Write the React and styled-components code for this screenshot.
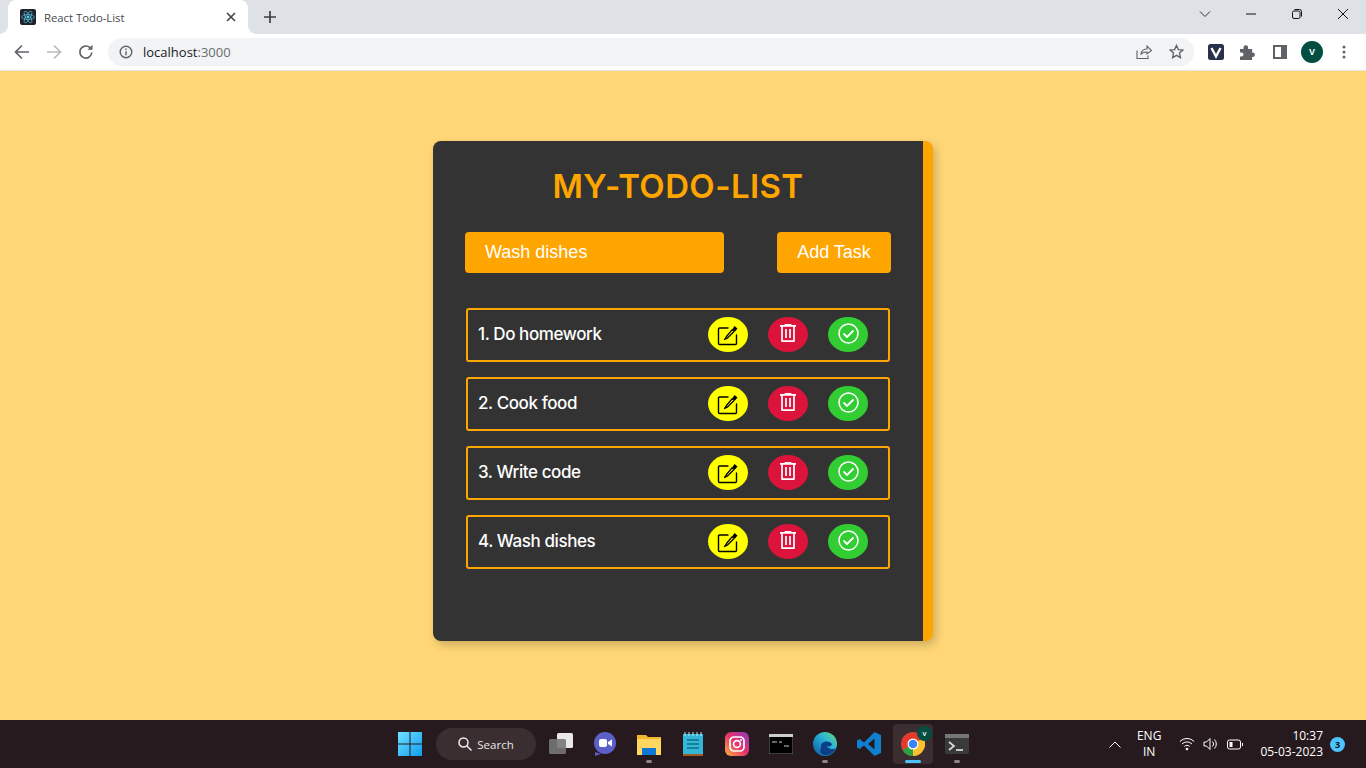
import React from 'react';
import styled, { createGlobalStyle } from 'styled-components';

const Global = createGlobalStyle`
  html, body { margin: 0; padding: 0; height: 100%; overflow: hidden; }
  body { font-family: "Liberation Sans", Arial, sans-serif; background: #ffd777; }
  #root { height: 100vh; }
`;
const Screen = styled.div`display:flex;flex-direction:column;width:1366px;height:768px;overflow:hidden;`;
const Browser = styled.header`flex:none;height:71px;display:flex;flex-direction:column;background:#fff;`;
const TabStrip = styled.div`height:34px;flex:none;background:#dee1e6;display:flex;align-items:stretch;padding-left:8px;`;
const Tab = styled.div`
  width:240px;height:34px;background:#fff;border-radius:8px 8px 0 0;display:flex;align-items:center;padding:0 12px;box-sizing:border-box;font-size:11.300px;color:#45494e;font-family:"Open Sans","Liberation Sans",sans-serif;position:relative;
  &::before,&::after{content:"";position:absolute;bottom:0;width:8px;height:8px;}
  &::before{left:-8px;background:radial-gradient(circle at 0 0,#dee1e6 7.500px,#fff 8px);}
  &::after{right:-8px;background:radial-gradient(circle at 100% 0,#dee1e6 7.500px,#fff 8px);}
`;
const Favicon = styled.span`width:16px;height:16px;background:#20232a;border-radius:2px;display:flex;align-items:center;justify-content:center;margin-right:8px;`;
const TabTitle = styled.span`flex:1;`;
const NewTab = styled.span`margin-left:6px;width:32px;display:flex;align-items:center;justify-content:center;`;
const WindowControls = styled.div`margin-left:auto;display:flex;align-self:flex-start;`;
const WinBtn = styled.span`width:46px;height:28px;display:flex;align-items:center;justify-content:center;`;
const Toolbar = styled.div`height:37px;flex:none;display:flex;align-items:center;padding:0 0 1px 6px;box-sizing:border-box;border-bottom:1px solid #e3e3e3;`;
const NavBtn = styled.span`width:32px;height:32px;display:flex;align-items:center;justify-content:center;`;
const Omnibox = styled.div`flex:none;width:1086px;height:28px;margin-left:6px;background:#f1f3f4;border-radius:14px;display:flex;align-items:center;box-sizing:border-box;padding:0 2px 0 11px;font-family:"Open Sans","Liberation Sans",sans-serif;font-size:13px;color:#202124;`;
const Host = styled.span`margin-left:10px;`;
const Port = styled.span`color:#6a6e72;flex:1;`;
const OmniIcon = styled.span`width:32px;display:flex;justify-content:center;`;
const Avatar = styled.span`width:22px;height:22px;border-radius:50%;background:#024f41;color:#fff;font-size:9px;font-weight:700;display:flex;align-items:center;justify-content:center;`;
const ChromeBadge = styled(Avatar)`position:absolute;right:1px;top:2px;width:15px;height:15px;font-size:6px;`;
const ExtIcon = styled.span`width:32px;height:32px;display:flex;align-items:center;justify-content:center;`;
const ExtStart = styled(ExtIcon)`margin-left:6px;`;
const Main = styled.main`flex:1;background:#ffd777;display:flex;justify-content:center;align-items:flex-start;padding-top:70px;box-sizing:border-box;`;
const Card = styled.section`width:500px;height:500px;box-sizing:border-box;background:#333;border-right:10px solid orange;border-radius:8px;box-shadow:3px 4px 10px rgba(0,0,0,.2);padding:24px 32px 0;display:flex;flex-direction:column;`;
const Title = styled.h1`margin:0;height:42px;line-height:42px;text-align:center;color:orange;font-family:Inter,"Noto Sans",sans-serif;font-size:33px;font-weight:600;letter-spacing:.4px;`;
const Form = styled.div`display:flex;justify-content:space-between;margin:25px 0 35px;width:426px;`;
const Input = styled.div`width:259px;height:41px;box-sizing:border-box;padding-left:20px;line-height:40px;background:orange;border-radius:4px;color:#fff;font-size:18px;`;
const AddBtn = styled.div`width:114px;height:41px;line-height:40px;text-align:center;background:orange;border-radius:4px;color:#fff;font-size:18px;`;
const List = styled.ul`list-style:none;margin:0;padding:0 0 0 1px;display:flex;flex-direction:column;gap:15px;width:424px;`;
const Row = styled.li`height:54px;box-sizing:border-box;border:2px solid orange;border-radius:3px;display:flex;align-items:center;padding:0 20px 1px 10px;`;
const Label = styled.span`flex:1;color:#fff;font-family:Inter,"Noto Sans",sans-serif;font-weight:500;font-size:17px;letter-spacing:-.42px;padding-bottom:1px;`;
const Actions = styled.div`display:flex;gap:20px;`;
const RoundBtn = styled.span`width:40px;height:35px;border-radius:50%;background:${p => p.$bg};display:flex;align-items:center;justify-content:center;`;
const Taskbar = styled.footer`flex:none;height:48px;background:#271a1e;display:flex;align-items:center;position:relative;font-family:"Open Sans","Liberation Sans",sans-serif;color:#fff;`;
const Center = styled.div`position:absolute;left:388px;top:0;height:48px;display:flex;align-items:center;`;
const Search = styled.div`width:100px;height:32px;margin:0 3px 0 4px;border-radius:16px;background:#3a2e31;display:flex;align-items:center;justify-content:center;gap:5px;font-size:11.500px;font-weight:500;color:#e9e6e6;`;
const AppIcon = styled.span`width:40px;height:40px;margin:0 2px;display:flex;align-items:center;justify-content:center;position:relative;border-radius:4px;background:${p => p.$active ? '#3a2e31' : 'transparent'};`;
const Dot = styled.i`position:absolute;left:50%;bottom:1px;transform:translateX(-50%);height:3px;width:${p => p.$active ? 16 : 6}px;border-radius:2px;background:${p => p.$active ? '#4cc2ff' : '#8d8588'};`;
const Tray = styled.div`margin-left:auto;display:flex;align-items:center;padding-right:43px;`;
const Lang = styled.div`font-size:12px;line-height:16px;text-align:center;margin:0 18px 0 16px;`;
const Clock = styled.div`font-size:12px;line-height:16px;text-align:right;margin-left:16px;`;
const Badge = styled.span`position:absolute;right:21px;top:17px;width:15px;height:15px;border-radius:50%;background:#4cc2ff;color:#111;font-size:9px;font-weight:700;display:flex;align-items:center;justify-content:center;`;
const TrayIcons = styled.div`display:flex;align-items:center;gap:8px;`;

const s = (stroke, w = 1.5) => ({ fill: 'none', stroke, strokeWidth: w, strokeLinecap: 'round', strokeLinejoin: 'round' });
const EditIcon = () => (<svg width="22" height="22" viewBox="0 0 22 22"><path d="M11 4H2.500a1 1 0 0 0-1 1v14.500a1 1 0 0 0 1 1h16a1 1 0 0 0 1-1V11" {...s('#000',1.400)}/><path d="M9.500 12.500L7.500 15.500l3.200-1.600L17 7.500 15.200 5.700z" fill="none" stroke="#000" strokeWidth="1.300" strokeLinejoin="round"/><path d="M15.500 5l2-3 3 2.500-2.700 3.200z" fill="#000"/></svg>);
const TrashIcon = () => (<svg width="16" height="18" viewBox="0 0 16 18"><path d="M0 1.800h16M5.500 1.800V.6h5v1.200M2 1.800v15.300h12V1.800M6 5v9M10 5v9" {...s('#fff',1.700)} strokeLinecap="butt"/></svg>);
const CheckIcon = () => (<svg width="21" height="21" viewBox="0 0 21 21"><circle cx="10.500" cy="10.500" r="9.500" {...s('#fff',1.500)}/><path d="M6 11l3 3 6-6" {...s('#fff',1.800)}/></svg>);
const TrashWrap = styled.span`display:flex;margin-top:-3px;`;
const CheckWrap = styled.span`display:flex;margin-top:-2px;`;
const items = ['1. Do homework', '2. Cook food', '3. Write code', '4. Wash dishes'];

export default function TodoPage() {
  return (
    <Screen>
      <Global />
      <Browser>
        <TabStrip>
          <Tab>
            <Favicon><svg width="14" height="14" viewBox="-12 -12 24 24" fill="none" stroke="#61dafb" strokeWidth="1"><circle r="2" fill="#61dafb"/><ellipse rx="11" ry="4.200"/><ellipse rx="11" ry="4.200" transform="rotate(60)"/><ellipse rx="11" ry="4.200" transform="rotate(120)"/></svg></Favicon>
            <TabTitle>React Todo-List</TabTitle>
            <svg width="10" height="10" viewBox="0 0 10 10"><path d="M1 1l8 8M9 1l-8 8" stroke="#45494e" strokeWidth="1.700"/></svg>
          </Tab>
          <NewTab><svg width="12" height="12" viewBox="0 0 12 12"><path d="M6 0v12M0 6h12" stroke="#3c4043" strokeWidth="1.700"/></svg></NewTab>
          <WindowControls>
            <WinBtn><svg width="12" height="8" viewBox="0 0 12 8"><path d="M1 1.500l5 5 5-5" fill="none" stroke="#333" /></svg></WinBtn>
            <WinBtn><svg width="10" height="2"><path d="M0 1h10" stroke="#111"/></svg></WinBtn>
            <WinBtn><svg width="10" height="10" viewBox="0 0 10 10" fill="none" stroke="#111"><rect x=".5" y="2" width="7.500" height="7.500" rx="1.500"/><path d="M2.500 .5h5a2 2 0 0 1 2 2v5"/></svg></WinBtn>
            <WinBtn><svg width="10" height="10" viewBox="0 0 10 10"><path d="M0 0l10 10M10 0L0 10" stroke="#111"/></svg></WinBtn>
          </WindowControls>
        </TabStrip>
        <Toolbar>
          <NavBtn><svg width="16" height="16" viewBox="0 0 16 16" fill="none" stroke="#5f6368" strokeWidth="1.700"><path d="M15 8H2M8 1.500L1.500 8 8 14.500"/></svg></NavBtn>
          <NavBtn><svg width="16" height="16" viewBox="0 0 16 16" fill="none" stroke="#b9bbbe" strokeWidth="1.700"><path d="M1 8h13M8 1.500L14.500 8 8 14.500"/></svg></NavBtn>
          <NavBtn><svg width="16" height="16" viewBox="0 0 16 16" fill="none" stroke="#5f6368" strokeWidth="1.700"><path d="M13.800 8.500A6 6 0 1 1 12 3.700"/><path d="M14.500 .8v5h-5z" fill="#5f6368" stroke="none"/></svg></NavBtn>
          <Omnibox>
            <svg width="14" height="14" viewBox="0 0 14 14" fill="none" stroke="#5f6368" strokeWidth="1.400"><circle cx="7" cy="7" r="5.800"/><path d="M7 6.200v4M7 3.600v1.400"/></svg>
            <Host>localhost</Host><Port>:3000</Port>
            <OmniIcon><svg width="16" height="16" viewBox="0 0 16 16" fill="none" stroke="#5f6368" strokeWidth="1.100"><path d="M1 6.500v8h11v-3M5 10c0-3 3-5 6-5V2l4.500 4.500L11 10V8c-2.500 0-4.500.5-6 2z"/></svg></OmniIcon>
            <OmniIcon><svg width="15" height="15" viewBox="0 0 16 16" fill="none" stroke="#5f6368" strokeWidth="1.400"><path d="M8 1.500l2 4.500 4.800.5-3.600 3.200 1 4.800L8 12.100l-4.200 2.400 1-4.800L1.200 6.500 6 6z"/></svg></OmniIcon>
          </Omnibox>
          <ExtStart><svg width="16" height="16" viewBox="0 0 16 16"><rect width="16" height="16" rx="2.500" fill="#28304a"/><path d="M3.500 4L8 12.500 12.500 4" fill="none" stroke="#fff" strokeWidth="2.400"/></svg></ExtStart>
          <ExtIcon><svg width="16" height="16" viewBox="0 0 16 16" fill="#5f6368"><path d="M0 5h3.500V3.500a2.300 2.300 0 0 1 4.600 0V5h4v3.500h.5a2.300 2.300 0 0 1 0 4.600h-.5V16H0v-3.500h1.500a2 2 0 0 0 0-4H0z"/></svg></ExtIcon>
          <ExtIcon><svg width="14" height="14" viewBox="0 0 14 14"><rect x="1" y="1" width="12" height="12" fill="none" stroke="#5f6368" strokeWidth="2"/><rect x="8" y="1" width="5" height="12" fill="#5f6368"/></svg></ExtIcon>
          <ExtIcon><Avatar>V</Avatar></ExtIcon>
          <ExtIcon><svg width="4" height="14" viewBox="0 0 4 14" fill="#5f6368"><circle cx="2" cy="2" r="1.500"/><circle cx="2" cy="7" r="1.500"/><circle cx="2" cy="12" r="1.500"/></svg></ExtIcon>
        </Toolbar>
      </Browser>
      <Main>
        <Card>
          <Title>MY-TODO-LIST</Title>
          <Form>
            <Input>Wash dishes</Input>
            <AddBtn>Add Task</AddBtn>
          </Form>
          <List>
            {items.map(t => (
              <Row key={t}>
                <Label>{t}</Label>
                <Actions>
                  <RoundBtn $bg="#ffff00"><EditIcon /></RoundBtn>
                  <RoundBtn $bg="#dc143c"><TrashWrap><TrashIcon /></TrashWrap></RoundBtn>
                  <RoundBtn $bg="#32cd32"><CheckWrap><CheckIcon /></CheckWrap></RoundBtn>
                </Actions>
              </Row>
            ))}
          </List>
        </Card>
      </Main>
      <Taskbar>
        <Center>
          <AppIcon><svg width="24" height="24" viewBox="0 0 24 24"><defs><linearGradient id="w" x1="0" y1="0" x2="1" y2="1"><stop offset="0" stopColor="#6fe3ff"/><stop offset="1" stopColor="#0f9cf0"/></linearGradient></defs><path d="M0 0h11.500v11.500H0zM12.500 0H24v11.500H12.500zM0 12.500h11.500V24H0zM12.500 12.500H24V24H12.500z" fill="url(#w)"/></svg></AppIcon>
          <Search><svg width="14" height="14" viewBox="0 0 14 14" fill="none" stroke="#eee" strokeWidth="1.500"><circle cx="5.500" cy="5.500" r="4.500"/><path d="M9 9l4.500 4.500"/></svg>Search</Search>
          <AppIcon><svg width="24" height="24" viewBox="0 0 24 24"><rect x="8" y="1" width="16" height="15" rx="1.500" fill="#e8e8e8"/><rect x="0" y="7" width="17" height="15" rx="1.500" fill="#777" fillOpacity=".9"/></svg></AppIcon>
          <AppIcon><svg width="24" height="24" viewBox="0 0 24 24"><circle cx="12" cy="11" r="11" fill="#5b5fc7"/><path d="M2 20l0 4 6-2z" fill="#5b5fc7"/><rect x="6" y="7" width="8" height="8" rx="2" fill="#fff"/><path d="M15 10l4-2.500v7L15 12z" fill="#fff"/></svg></AppIcon>
          <AppIcon><svg width="24" height="22" viewBox="0 0 24 22"><path d="M0 2h9l2 2h13v18H0z" fill="#f3b72d"/><path d="M0 6h24v16H0z" fill="#ffd75e"/><rect x="5" y="15" width="14" height="7" fill="#0f78d4"/></svg><Dot /></AppIcon>
          <AppIcon><svg width="22" height="24" viewBox="0 0 22 24"><rect x="1" y="2" width="20" height="21" fill="#34b6d8"/><path d="M1 22h20v2H1z" fill="#a35c20"/><path d="M5 8h12M5 12h12M5 16h12" stroke="#0d6d87" strokeWidth="1.500"/><path d="M3 0v4M7 0v4M11 0v4M15 0v4M19 0v4" stroke="#bfe9f3"/></svg></AppIcon>
          <AppIcon><svg width="24" height="24" viewBox="0 0 24 24"><defs><linearGradient id="ig" x1="0" y1="1" x2="1" y2="0"><stop offset="0" stopColor="#fdb53b"/><stop offset=".5" stopColor="#e8316b"/><stop offset="1" stopColor="#8a3ac0"/></linearGradient></defs><rect width="24" height="24" rx="6" fill="url(#ig)"/><rect x="5" y="5" width="14" height="14" rx="4" fill="none" stroke="#fff" strokeWidth="1.700"/><circle cx="12" cy="12" r="3.400" fill="none" stroke="#fff" strokeWidth="1.700"/><circle cx="16" cy="8" r="1" fill="#fff"/></svg></AppIcon>
          <AppIcon><svg width="24" height="20" viewBox="0 0 24 20"><rect width="24" height="20" fill="#000" stroke="#777"/><rect width="24" height="3" fill="#ccc"/><path d="M3 8h5M10 8h3M15 12h5" stroke="#ccc"/></svg></AppIcon>
          <AppIcon><svg width="24" height="24" viewBox="0 0 24 24"><defs><linearGradient id="ed" x1="0" y1="1" x2="1" y2="0"><stop offset="0" stopColor="#0b55a5"/><stop offset=".6" stopColor="#2bb4d8"/><stop offset="1" stopColor="#6fdc6d"/></linearGradient></defs><circle cx="12" cy="12" r="12" fill="url(#ed)"/><path d="M8 14c0-5 8-6 11-2 0 3-6 3-6 1 4 7 10 3 10 3-2 6-10 9-14 6-3-2-1-6-1-8z" fill="#0c3f86"/></svg><Dot /></AppIcon>
          <AppIcon><svg width="24" height="24" viewBox="0 0 24 24"><path d="M17.500 0L24 3v18l-6.500 3L7 13.500 2.500 17 0 15.500V8.500L2.500 7 7 10.500zM17.500 6.500L11 12l6.500 5.500z" fill="#0f7fd0"/></svg></AppIcon>
          <AppIcon $active><svg width="24" height="24" viewBox="0 0 24 24"><circle cx="12" cy="12" r="12" fill="#e23b2e"/><path d="M12 12L1.600 18A12 12 0 0 0 12 24z" fill="#2ea043"/><path d="M12 12V24A12 12 0 0 0 22.400 6z" fill="#fbc02d"/><circle cx="12" cy="12" r="5.500" fill="#fff"/><circle cx="12" cy="12" r="4.300" fill="#3b82f6"/></svg><ChromeBadge>V</ChromeBadge><Dot $active /></AppIcon>
          <AppIcon><svg width="24" height="20" viewBox="0 0 24 20"><rect width="24" height="20" rx="2" fill="#3a3a3a"/><rect width="24" height="4" fill="#777"/><path d="M4 8l5 4-5 4" fill="none" stroke="#ddd" strokeWidth="1.700"/><path d="M11 16h7" stroke="#ddd" strokeWidth="1.700"/></svg><Dot /></AppIcon>
        </Center>
        <Tray>
          <svg width="12" height="7" viewBox="0 0 12 7" fill="none" stroke="#fff"><path d="M.5 6.500L6 1l5.500 5.500"/></svg>
          <Lang>ENG<br />IN</Lang>
          <TrayIcons>
            <svg width="16" height="14" viewBox="0 0 16 14" fill="none" stroke="#fff"><path d="M.8 4.500a10 10 0 0 1 14.400 0M3 7a7 7 0 0 1 10 0M5.300 9.500a3.700 3.700 0 0 1 5.400 0"/><circle cx="8" cy="12" r=".9" fill="#fff"/></svg>
            <svg width="16" height="14" viewBox="0 0 16 14" fill="none" stroke="#fff"><path d="M1 5h2.500L7 1.500v11L3.500 9H1zM9.500 4.500a3.500 3.500 0 0 1 0 5M11.500 2.500a6.500 6.500 0 0 1 0 9"/></svg>
            <svg width="17" height="11" viewBox="0 0 17 11" fill="none" stroke="#fff"><rect x=".5" y="1" width="13" height="9" rx="2"/><rect x="2.500" y="3" width="3" height="5" fill="#fff" stroke="none"/><path d="M15.500 4v3"/></svg>
          </TrayIcons>
          <Clock>10:37<br />05-03-2023</Clock>
        </Tray>
        <Badge>3</Badge>
      </Taskbar>
    </Screen>
  );
}
